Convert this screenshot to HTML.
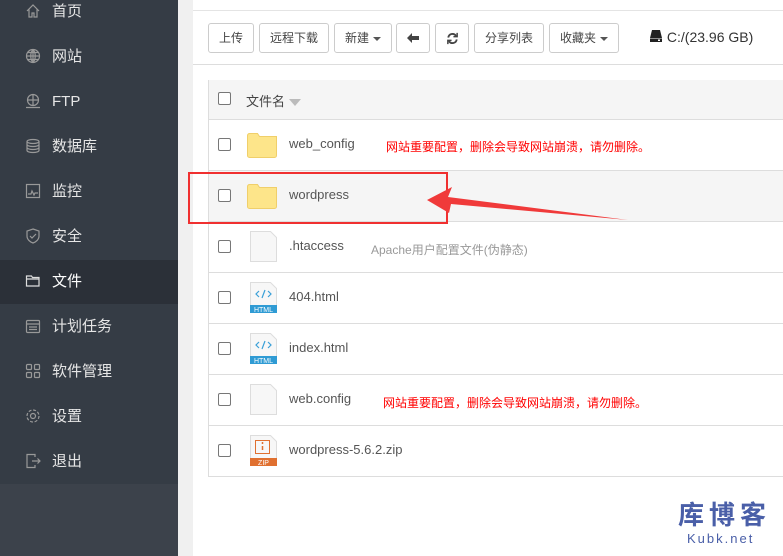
<!DOCTYPE html>
<html><head><meta charset="utf-8"><style>
*{margin:0;padding:0;box-sizing:border-box}
body{width:783px;height:556px;overflow:hidden;position:relative;background:#f0f0f0;font-family:"Liberation Sans","Noto Sans CJK SC",sans-serif;font-size:13px;color:#555}
.side{position:absolute;left:0;top:0;width:178px;height:556px;background:#3c424b}
.sidein{position:absolute;left:0;top:0;width:178px;height:484px;background:#353c45}
.item{position:absolute;left:0;width:178px;height:44px;color:#e6e6e6;font-size:15px;line-height:44px;padding-left:52px}
.item.act{background:#2b3038;color:#fff}
.item svg{position:absolute;left:25px;top:13px}
.main{position:absolute;left:193px;top:0;width:590px;height:556px;background:#fff}
.topl{position:absolute;left:193px;top:10px;width:590px;height:1px;background:#e4e4e4}
.sep{position:absolute;left:193px;top:64px;width:590px;height:1px;background:#ddd}
.btn{position:absolute;top:23px;height:30px;border:1px solid #ccc;border-radius:3px;background:#fff;color:#444;font-size:12px;line-height:28px;text-align:center}
.car{display:inline-block;width:0;height:0;border-left:4px solid transparent;border-right:4px solid transparent;border-top:4px solid #555;vertical-align:middle;margin-left:4px}
.tbl{position:absolute;left:208px;top:80px;width:580px;height:397px;border:1px solid #ddd}
.row{position:absolute;left:0;width:580px;height:51px;border-top:1px solid #ddd}
.cb{position:absolute;left:9px;width:13px;height:13px;border:1px solid #777;border-radius:2px;background:#fff}
.nm{position:absolute;left:80px;color:#555;font-size:13px}
.red{position:absolute;color:#f00;font-size:12px}
</style></head><body>
<div class="side"><div class="sidein"></div>
<div class="item" style="top:-10px"><svg width="16" height="16" viewBox="0 0 16 16" fill="none" stroke="#999" stroke-width="1.2"><path d="M2 8L8 2l6 6M4 6.5V14h3v-4h2v4h3V6.5"/></svg>首页</div>
<div class="item" style="top:35px"><svg width="16" height="16" viewBox="0 0 16 16" fill="none" stroke="#999" stroke-width="1.2"><circle cx="8" cy="8" r="6.5"/><path d="M1.5 8h13M8 1.5v13M3 4.5h10M3 11.5h10M8 1.5c-3 3-3 10 0 13M8 1.5c3 3 3 10 0 13"/></svg>网站</div>
<div class="item" style="top:80px"><svg width="16" height="16" viewBox="0 0 16 16" fill="none" stroke="#999" stroke-width="1.2"><circle cx="8" cy="7" r="5.5"/><path d="M2.5 7h11M8 1.5v11M1 14.5h14"/></svg>FTP</div>
<div class="item" style="top:125px"><svg width="16" height="16" viewBox="0 0 16 16" fill="none" stroke="#999" stroke-width="1.2"><ellipse cx="8" cy="3.5" rx="6" ry="2"/><path d="M2 3.5v9c0 1.1 2.7 2 6 2s6-.9 6-2v-9M2 6.5c0 1.1 2.7 2 6 2s6-.9 6-2M2 9.5c0 1.1 2.7 2 6 2s6-.9 6-2"/></svg>数据库</div>
<div class="item" style="top:170px"><svg width="16" height="16" viewBox="0 0 16 16" fill="none" stroke="#999" stroke-width="1.2"><rect x="1.5" y="1.5" width="13" height="13"/><path d="M3 11h3l1-3 2 4 1-2h3"/></svg>监控</div>
<div class="item" style="top:215px"><svg width="16" height="16" viewBox="0 0 16 16" fill="none" stroke="#999" stroke-width="1.2"><path d="M8 1l6 2v5c0 3.5-3 6-6 7-3-1-6-3.5-6-7V3z"/><path d="M5 8l2 2 4-4"/></svg>安全</div>
<div class="item act" style="top:260px"><svg width="16" height="16" viewBox="0 0 16 16" fill="none" stroke="#ddd" stroke-width="1.2"><path d="M1.5 3h5l1 1.5h6.5V13H1.5zM1.5 6h13"/></svg>文件</div>
<div class="item" style="top:305px"><svg width="16" height="16" viewBox="0 0 16 16" fill="none" stroke="#999" stroke-width="1.2"><rect x="1.5" y="2.5" width="13" height="12" rx="1"/><path d="M1.5 6h13M4 9h8M4 11.5h8"/></svg>计划任务</div>
<div class="item" style="top:350px"><svg width="16" height="16" viewBox="0 0 16 16" fill="none" stroke="#999" stroke-width="1.2"><rect x="1.5" y="1.5" width="5" height="5" rx="1"/><rect x="9.5" y="1.5" width="5" height="5" rx="1"/><rect x="1.5" y="9.5" width="5" height="5" rx="1"/><rect x="9.5" y="9.5" width="5" height="5" rx="1"/></svg>软件管理</div>
<div class="item" style="top:395px"><svg width="16" height="16" viewBox="0 0 16 16" fill="none" stroke="#999" stroke-width="1.2"><circle cx="8" cy="8" r="2.5"/><circle cx="8" cy="8" r="6" stroke-dasharray="3 1.7"/></svg>设置</div>
<div class="item" style="top:440px"><svg width="16" height="16" viewBox="0 0 16 16" fill="none" stroke="#999" stroke-width="1.2"><path d="M10 4V1.5H2v13h8V12M7 8h8M12.5 5.5L15 8l-2.5 2.5"/></svg>退出</div>
</div>
<div class="main"></div>
<div class="topl"></div>
<div class="btn" style="left:208px;width:46px">上传</div>
<div class="btn" style="left:259px;width:70px">远程下载</div>
<div class="btn" style="left:334px;width:58px">新建<span class="car"></span></div>
<div class="btn" style="left:396px;width:34px"><svg width="12" height="12" viewBox="0 0 12 12" style="margin-top:8px"><path d="M0 6l5-5v3h7v4H5v3z" fill="#444"/></svg></div>
<div class="btn" style="left:435px;width:34px"><svg width="13" height="13" viewBox="0 0 14 14" style="margin-top:8px" fill="none" stroke="#444" stroke-width="2"><path d="M2.5 6a4.5 4.5 0 0 1 8.3-1.8M11.5 8a4.5 4.5 0 0 1-8.3 1.8"/><path d="M12 1v4H8M2 13V9h4" stroke-width="1.6"/></svg></div>
<div class="btn" style="left:474px;width:70px">分享列表</div>
<div class="btn" style="left:549px;width:70px">收藏夹<span class="car"></span></div>
<div style="position:absolute;left:649px;top:29px;font-size:14px;color:#333"><svg width="14" height="14" viewBox="0 0 14 14" style="vertical-align:-1px"><path d="M3 1h8l2 8H1z" fill="#222"/><rect x="1" y="9.5" width="12" height="3.5" fill="#222"/><rect x="9" y="10.5" width="2" height="1.5" fill="#fff"/></svg> C:/(23.96 GB)</div>
<div class="sep"></div>
<div class="tbl">
<div class="row" style="top:-1px;height:39px;background:#f5f5f5;border-top:none"><div class="cb" style="top:12px"></div><div class="nm" style="left:37px;top:11px;color:#444">文件名 <span style="display:inline-block;border-left:6px solid transparent;border-right:6px solid transparent;border-top:7px solid #bbb;vertical-align:middle"></span></div></div>
<div class="row" style="top:38px"><div class="cb" style="top:18px"></div>
<svg width="32" height="26" style="position:absolute;left:38px;top:12px"><path d="M.5 3.5a2 2 0 0 1 2-2h8l2 3h17v19a2 2 0 0 1-2 2h-25a2 2 0 0 1-2-2z" fill="#fde58a" stroke="#f0cf6a"/></svg>
<div class="nm" style="top:16px">web_config</div><div class="red" style="left:177px;top:18px">网站重要配置，删除会导致网站崩溃，请勿删除。</div></div>
<div class="row" style="top:89px;background:#f5f5f5"><div class="cb" style="top:18px"></div>
<svg width="32" height="26" style="position:absolute;left:38px;top:12px"><path d="M.5 3.5a2 2 0 0 1 2-2h8l2 3h17v19a2 2 0 0 1-2 2h-25a2 2 0 0 1-2-2z" fill="#fde58a" stroke="#f0cf6a"/></svg>
<div class="nm" style="top:16px">wordpress</div></div>
<div class="row" style="top:140px"><div class="cb" style="top:18px"></div>
<svg width="27" height="31" style="position:absolute;left:41px;top:9px"><path d="M.5 .5h20l6 6v24H.5z" fill="#f7f7f7" stroke="#ddd"/></svg>
<div class="nm" style="top:16px">.htaccess</div><div style="position:absolute;left:162px;top:19px;color:#999;font-size:12px">Apache用户配置文件(伪静态)</div></div>
<div class="row" style="top:191px"><div class="cb" style="top:18px"></div>
<svg width="27" height="31" style="position:absolute;left:41px;top:9px"><path d="M.5 .5h20l6 6v24H.5z" fill="#f7f7f7" stroke="#ddd"/><path d="M9 9l-3 3 3 3M18 9l3 3-3 3M15 8l-3 8" stroke="#3aa0d8" fill="none" stroke-width="1.2"/><rect x="0" y="23" width="27" height="8" fill="#2f9bd4"/><text x="13.5" y="30" font-size="7" fill="#fff" text-anchor="middle" font-family="Liberation Sans">HTML</text></svg>
<div class="nm" style="top:16px">404.html</div></div>
<div class="row" style="top:242px"><div class="cb" style="top:18px"></div>
<svg width="27" height="31" style="position:absolute;left:41px;top:9px"><path d="M.5 .5h20l6 6v24H.5z" fill="#f7f7f7" stroke="#ddd"/><path d="M9 9l-3 3 3 3M18 9l3 3-3 3M15 8l-3 8" stroke="#3aa0d8" fill="none" stroke-width="1.2"/><rect x="0" y="23" width="27" height="8" fill="#2f9bd4"/><text x="13.5" y="30" font-size="7" fill="#fff" text-anchor="middle" font-family="Liberation Sans">HTML</text></svg>
<div class="nm" style="top:16px">index.html</div></div>
<div class="row" style="top:293px"><div class="cb" style="top:18px"></div>
<svg width="27" height="31" style="position:absolute;left:41px;top:9px"><path d="M.5 .5h20l6 6v24H.5z" fill="#f7f7f7" stroke="#ddd"/></svg>
<div class="nm" style="top:16px">web.config</div><div class="red" style="left:174px;top:19px">网站重要配置，删除会导致网站崩溃，请勿删除。</div></div>
<div class="row" style="top:344px"><div class="cb" style="top:18px"></div>
<svg width="27" height="31" style="position:absolute;left:41px;top:9px"><path d="M.5 .5h20l6 6v24H.5z" fill="#f7f7f7" stroke="#ddd"/><rect x="5.5" y="5.5" width="14" height="13" fill="none" stroke="#e07030"/><path d="M12.5 7v2M12.5 11v4" stroke="#e07030" stroke-width="1.5"/><rect x="0" y="23" width="27" height="8" fill="#e07030"/><text x="13.5" y="30" font-size="7" fill="#fff" text-anchor="middle" font-family="Liberation Sans">ZIP</text></svg>
<div class="nm" style="top:16px">wordpress-5.6.2.zip</div></div>
</div>
<div style="position:absolute;left:188px;top:172px;width:260px;height:52px;border:2px solid #f03030"></div>
<svg width="783" height="556" style="position:absolute;left:0;top:0"><path d="M628 220L448 197l4 -10-25 13 22 13 2-9z" fill="#f03a3a"/></svg>
<div style="position:absolute;left:678px;top:500px;color:#4a5fa8;font-size:26px;font-weight:bold;letter-spacing:5px;line-height:30px">库博客</div>
<div style="position:absolute;left:687px;top:531px;color:#4a5fa8;font-size:13px;letter-spacing:2px">Kubk.net</div>
</body></html>
